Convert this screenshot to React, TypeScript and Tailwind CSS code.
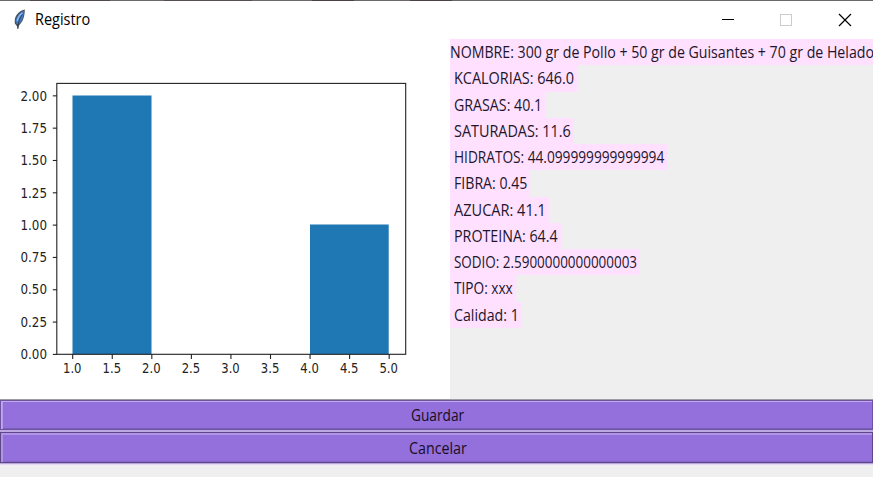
import { useLayoutEffect, useRef, useState } from "react";

type FitTextProps = { text: string; width: number; className?: string };

// Condenses a line of text horizontally so that it occupies a given width.
function FitText({ text, width, className = "" }: FitTextProps) {
  const ref = useRef<HTMLSpanElement>(null);
  const [scale, setScale] = useState(1);
  useLayoutEffect(() => {
    const measure = () => {
      if (ref.current) setScale(width / ref.current.offsetWidth);
    };
    measure();
    document.fonts.ready.then(measure);
  }, [text, width]);
  return (
    <span className={`block ${className}`} style={{ width }}>
      <span
        ref={ref}
        className="inline-block origin-left whitespace-nowrap"
        style={{ transform: `scaleX(${scale})` }}
      >
        {text}
      </span>
    </span>
  );
}

const rows = [
  { text: "KCALORIAS: 646.0", width: 120 },
  { text: "GRASAS: 40.1", width: 88 },
  { text: "SATURADAS: 11.6", width: 117 },
  { text: "HIDRATOS: 44.099999999999994", width: 210 },
  { text: "FIBRA: 0.45", width: 73 },
  { text: "AZUCAR: 41.1", width: 92 },
  { text: "PROTEINA: 64.4", width: 104 },
  { text: "SODIO: 2.5900000000000003", width: 183 },
  { text: "TIPO: xxx", width: 59 },
  { text: "Calidad: 1", width: 65 },
];

const yTicks = ["0.00", "0.25", "0.50", "0.75", "1.00", "1.25", "1.50", "1.75", "2.00"];
const xTicks = ["1.0", "1.5", "2.0", "2.5", "3.0", "3.5", "4.0", "4.5", "5.0"];

function Feather() {
  return (
    <svg width="14" height="22" viewBox="0 0 14 22" className="block shrink-0">
      <path d="M11.800 0.500C7 1.500 2.500 5.500 1.800 10.500L1.800 14.500L3.800 17L5 20L6 16.500C9.500 13 11.800 8 11.800 0.500Z" fill="#4a5260" />
      <path d="M10.800 2C7 3.500 3.400 7.500 2.900 11.500L3.600 14.800L5.500 15.300C8.800 12 10.600 8 10.800 2Z" fill="#4380cb" />
      <path d="M9.300 4C6.500 6 4.800 9 4.300 12" stroke="#8fbcf0" strokeWidth="1.500" fill="none" />
      <path d="M9.300 5.500C7 9 5 13 4.800 20" stroke="#222b38" strokeWidth="0.800" fill="none" />
    </svg>
  );
}

function TitleBar() {
  return (
    <header className="flex h-[38px] shrink-0 items-center bg-white">
      <div className="flex flex-1 items-center pl-[13px]">
        <Feather />
        <FitText text="Registro" width={55} className="ml-2 pb-[2px] text-[15.5px] leading-5 text-black" />
      </div>
      <svg width="174" height="38" viewBox="0 0 174 38" className="block" fill="none" shapeRendering="crispEdges">
        <path d="M23 18.500H35" stroke="#000" />
        <rect x="81.500" y="13.500" width="11" height="11" stroke="#ccc" />
        <path d="M140 13L152 25M152 13L140 25" stroke="#000" shapeRendering="geometricPrecision" strokeWidth="1.200" />
      </svg>
    </header>
  );
}

function Histogram() {
  return (
    <svg width="450" height="360" viewBox="0 39 450 360" className="block shrink-0 bg-white">
      <rect x="72.500" y="95.500" width="79" height="258.700" fill="#1f77b4" />
      <rect x="310" y="224.500" width="78.700" height="129.700" fill="#1f77b4" />
      <rect x="56.800" y="83.400" width="348.900" height="270.900" fill="none" stroke="#222" strokeWidth="1.100" />
      <g fill="#222" className="font-['DejaVu_Sans',sans-serif] text-[13.2px]">
        {yTicks.map((label, i) => {
          const y = 354.4 - i * 32.32;
          return (
            <g key={label}>
              <path d={`M52.800 ${y}H57`} stroke="#222" strokeWidth="1.100" />
              <text x="20.500" y={y + 4.7} textLength="26.500" lengthAdjust="spacingAndGlyphs">
                {label}
              </text>
            </g>
          );
        })}
        {xTicks.map((label, i) => {
          const x = 72.7 + i * 39.56;
          return (
            <g key={label}>
              <path d={`M${x} 354V359`} stroke="#222" strokeWidth="1.100" />
              <text x={x - 9.7} y="373" textLength="18.500" lengthAdjust="spacingAndGlyphs">
                {label}
              </text>
            </g>
          );
        })}
      </g>
    </svg>
  );
}

export default function App() {
  return (
    <div className="flex h-[477px] w-[873px] flex-col overflow-hidden bg-[#efefef] font-['Open_Sans','Noto_Sans',sans-serif] text-[#21152b]">
      <div className="flex h-px shrink-0 bg-[#6b686b] pl-[30px]">
        <div className="h-px w-[80px] bg-[#504950]" />
        <div className="ml-[54px] h-px w-[88px] bg-[#554e53]" />
        <div className="ml-[60px] h-px w-[42px] bg-[#4b4149]" />
        <div className="ml-[56px] h-px w-[42px] bg-[#4b4149]" />
      </div>
      <TitleBar />
      <main className="flex h-[360px] shrink-0">
        <Histogram />
        <section className="flex min-w-0 flex-1 flex-col items-start text-[15.5px] leading-[27.5px]">
          <div className="h-[26.25px] w-full overflow-hidden bg-[#ffe0ff]">
            <FitText text="NOMBRE: 300 gr de Pollo + 50 gr de Guisantes + 70 gr de Helado" width={424} />
          </div>
          {rows.map((row) => (
            <div key={row.text} className="h-[26.25px] bg-[#ffe0ff] pr-[3px] pl-[3.5px]">
              <FitText text={row.text} width={row.width} />
            </div>
          ))}
        </section>
      </main>
      <button className="flex h-[33px] shrink-0 flex-col border-t border-t-[#9f9aa7] text-[15.5px] text-[#170d24]">
        <span className="flex h-[30px] w-full items-center justify-center border-y border-r border-l border-t-[#705697] border-r-[#6d53a1] border-b-[#6d53a1] border-l-[#6d53a1] bg-[#9370db] pt-[2px] pl-[2px] shadow-[inset_1px_1px_0_#c0a8f2,inset_2px_0_0_#b79bea,inset_0_-1px_0_#7b5eb8]">
          <FitText text="Guardar" width={53} />
        </span>
        <span className="h-[2px] w-full bg-[#bda9e0]" />
      </button>
      <button className="flex h-[33px] shrink-0 flex-col text-[15.5px] text-[#170d24]">
        <span className="flex h-[31px] w-full items-center justify-center border border-[#5d4788] bg-[#9370db] pt-[2px] pl-[2px] shadow-[inset_0_2px_0_#b193e8,inset_2px_0_0_#b193e8,inset_0_-1px_0_#8766c9]">
          <FitText text="Cancelar" width={58} />
        </span>
        <span className="h-px w-full bg-[#b8a5d7]" />
        <span className="h-px w-full bg-[#e5d8fa]" />
      </button>
    </div>
  );
}
